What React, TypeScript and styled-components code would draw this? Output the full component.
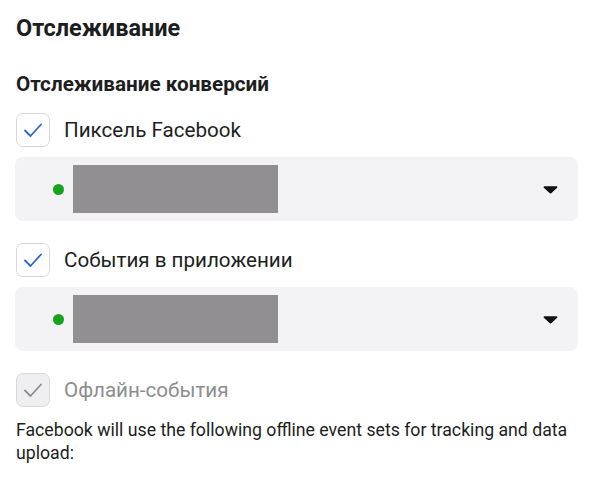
import styled, { createGlobalStyle } from "styled-components"

const Global = createGlobalStyle`
  body {
    margin: 0;
    background: #fff;
    font-family: Roboto, "Liberation Sans", sans-serif;
    color: #1c1e21;
  }
`

const Page = styled.div`
  width: 600px;
  height: 480px;
  overflow: hidden;
  padding: 15px 22px 0 16px;
  box-sizing: border-box;
`

const Title = styled.h1`
  margin: 0;
  font-size: 23.5px;
  font-weight: 700;
  line-height: 26px;
  color: #1c1e21;
`

const SubTitle = styled.h2`
  margin: 31px 0 0;
  font-size: 20.7px;
  font-weight: 700;
  line-height: 24px;
  color: #1c1e21;
`

const CheckRow = styled.div<{ $disabled?: boolean; $gap?: number }>`
  display: flex;
  align-items: center;
  gap: 14px;
  margin-top: ${(p) => p.$gap ?? 17}px;
  font-size: 20.6px;
  line-height: 24px;
  color: ${(p) => (p.$disabled ? "#8d8d8f" : "#1c1e21")};
`

const Box = styled.span<{ $disabled?: boolean }>`
  width: 34px;
  height: 34px;
  box-sizing: border-box;
  border: 1px solid #d9d7db;
  border-radius: 7px;
  background: ${(p) => (p.$disabled ? "#efeef0" : "#fff")};
  display: flex;
  align-items: center;
  justify-content: center;
`

const Select = styled.div`
  display: flex;
  align-items: center;
  height: 64px;
  margin: 10px 0 0 -1px;
  padding: 0 20px 0 38px;
  background: #f3f2f5;
  border-radius: 8px;
`

const Dot = styled.span`
  width: 11px;
  height: 11px;
  border-radius: 50%;
  background: #18a31c;
  margin-right: 9px;
`

const Redacted = styled.span`
  width: 205px;
  height: 48px;
  background: #918f92;
`

const Arrow = styled.svg`
  margin-left: auto;
`

const Note = styled.p`
  margin: 12px 0 0;
  font-size: 17.7px;
  line-height: 23px;
  color: #1c1e21;
`

const Check = ({ disabled }: { disabled?: boolean }) => (
  <Box $disabled={disabled}>
    <svg width="22" height="22" viewBox="0 0 22 22">
      <path
        d="M3 11.5l5.5 5.5L19 5.5"
        fill="none"
        stroke={disabled ? "#8e8d90" : "#2d66d3"}
        strokeWidth="1.8"
        strokeLinecap="round"
        strokeLinejoin="round"
      />
    </svg>
  </Box>
)

const Dropdown = () => (
  <Select>
    <Dot />
    <Redacted />
    <Arrow width="15" height="9" viewBox="0 0 15 9">
      <path
        d="M1.5 1.2h12c.8 0 1.2.9.7 1.5L8.2 8.2c-.4.4-1 .4-1.4 0L.8 2.7c-.5-.6-.1-1.5.7-1.5z"
        fill="#111"
      />
    </Arrow>
  </Select>
)

export default function App() {
  return (
    <Page>
      <Global />
      <Title>Отслеживание</Title>
      <SubTitle>Отслеживание конверсий</SubTitle>
      <CheckRow>
        <Check />
        Пиксель Facebook
      </CheckRow>
      <Dropdown />
      <CheckRow $gap={22}>
        <Check />
        События в приложении
      </CheckRow>
      <Dropdown />
      <CheckRow $disabled $gap={22}>
        <Check disabled />
        Офлайн-события
      </CheckRow>
      <Note>
        Facebook will use the following offline event sets for tracking and data
        upload:
      </Note>
    </Page>
  )
}
